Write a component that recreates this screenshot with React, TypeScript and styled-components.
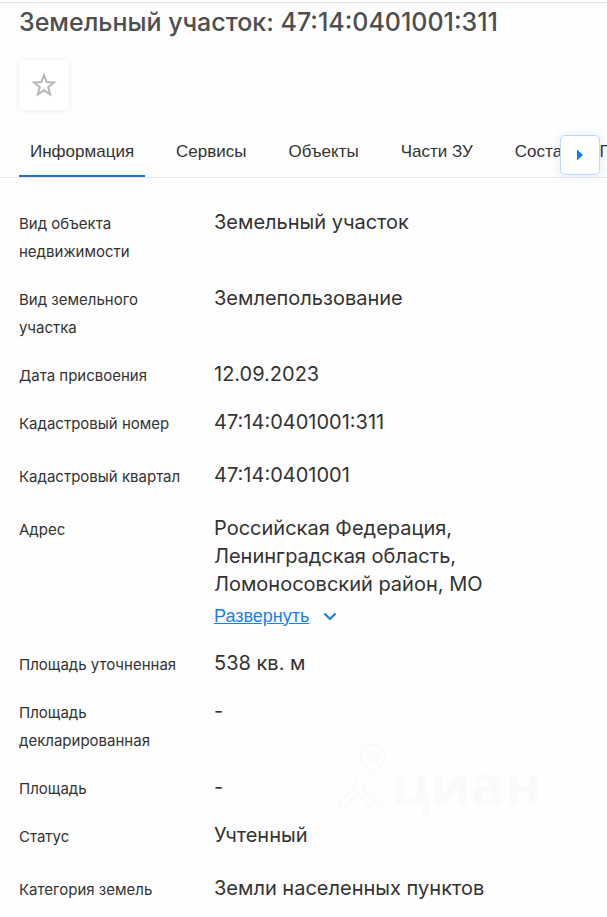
import React, { useState } from "react";
import styled, { createGlobalStyle } from "styled-components";

const GlobalStyle = createGlobalStyle`
  * { box-sizing: border-box; }
  body {
    margin: 0;
    background: #fefefe;
    color: #333;
    font-family: Inter, "Noto Sans", sans-serif;
  }
`;

const Page = styled.main`
  position: relative;
  margin-top: 2px;
  border-top: 1px solid #dfe5ee;
  padding-bottom: 15px;
`;

const Title = styled.h1`
  margin: 3px 19px 0;
  font-size: 25px;
  line-height: 32px;
  font-weight: 500;
  color: #4f4f4f;
`;

const Actions = styled.div`
  display: flex;
  padding: 22px 19px 24px;
`;

const FavoriteButton = styled.button`
  display: flex;
  align-items: center;
  justify-content: center;
  width: 50px;
  height: 50px;
  padding: 0;
  border: 0;
  border-radius: 5px;
  background: #fff;
  color: #b8b8b8;
  box-shadow: 0 1px 6px rgba(0, 0, 0, 0.08);
  cursor: pointer;
`;

const TabBar = styled.nav`
  position: relative;
  height: 44px;
  padding-left: 19px;
  border-bottom: 1px solid #e4e8ef;
`;

const TabScroller = styled.div`
  display: flex;
  gap: 20px;
  height: 43px;
  overflow: hidden;
`;

const Tab = styled.button<{ $active: boolean }>`
  flex: none;
  height: 43px;
  padding: 0 11px 6px;
  border: 0;
  border-bottom: 2px solid ${(p) => (p.$active ? "#1a75c8" : "transparent")};
  background: none;
  color: #333;
  font: 17px/32px "Liberation Sans", Arial, sans-serif;
  white-space: nowrap;
  cursor: pointer;
`;

const NextButton = styled.button`
  position: absolute;
  top: 1px;
  right: 7px;
  display: flex;
  align-items: center;
  justify-content: center;
  width: 40px;
  height: 40px;
  padding: 0;
  border: 1px solid #bcd9f8;
  border-radius: 5px;
  background: #fff;
  color: #0b80f5;
  box-shadow: 0 0 8px rgba(60, 110, 180, 0.16);
  cursor: pointer;
`;

const Details = styled.dl`
  display: flex;
  flex-direction: column;
  gap: 20px;
  margin: 0;
  padding: 30px 20px 0 19px;
`;

const Row = styled.div<{ $tall?: boolean }>`
  display: grid;
  grid-template-columns: 175px minmax(0, 280px);
  column-gap: 20px;
  min-height: ${(p) => (p.$tall ? "33px" : "28px")};
`;

const Label = styled.dt`
  margin: 2px 0 -2px;
  font-size: 15px;
  line-height: 28px;
`;

const Value = styled.dd`
  margin: 0;
  font-size: 20px;
  line-height: 28px;
`;

const ExpandLink = styled.a`
  display: flex;
  align-items: center;
  gap: 14px;
  height: 31px;
  padding-top: 4px;
  color: #1a80f0;
  font: 18px/24px "Liberation Sans", Arial, sans-serif;
  text-decoration: none;
  span { text-decoration: underline; }
`;

const Watermark = styled.div`
  position: absolute;
  left: 336px;
  top: 740px;
  display: flex;
  align-items: flex-end;
  color: #fafafa;
  pointer-events: none;
  font: 700 56px/60px "Open Sans", sans-serif;
`;

const StarIcon = () => (
  <svg width="26" height="26" viewBox="0 0 26 26" fill="none" stroke="currentColor" strokeWidth="2" aria-hidden="true">
    <path d="M13 3.2 15.6 10.1 23 10.5 17.2 15.1 19.2 22.4 13 18.3 6.8 22.4 8.8 15.1 3 10.5 10.4 10.1Z" />
  </svg>
);

const ArrowIcon = () => (
  <svg width="8" height="12" viewBox="0 0 8 12" fill="currentColor" aria-hidden="true">
    <path d="M1 .6 7 6 1 11.4Z" />
  </svg>
);

const ChevronIcon = () => (
  <svg width="14" height="10" viewBox="0 0 14 10" fill="none" stroke="currentColor" strokeWidth="2.2" aria-hidden="true">
    <path d="m1.5 2.5 5.5 5.5 5.5-5.5" />
  </svg>
);

const PinIcon = () => (
  <svg width="56" height="70" viewBox="0 0 56 70" fill="none" stroke="currentColor" strokeWidth="2" aria-hidden="true">
    <path d="M37 32c-8-8-12-12-12-18a12 12 0 0 1 24 0c0 6-4 10-12 18Z" />
    <circle cx="37" cy="14" r="5" />
    <path d="M20 37h7v10l18 17-5 5-19-19-14 17-5-5 18-19Z" />
  </svg>
);

const tabs = ["Информация", "Сервисы", "Объекты", "Части ЗУ", "Состав ЕНП"];

interface Field {
  label: string;
  value: string;
  tall?: boolean;
  expandable?: boolean;
}

const fields: Field[] = [
  { label: "Вид объекта недвижимости", value: "Земельный участок" },
  { label: "Вид земельного участка", value: "Землепользование" },
  { label: "Дата присвоения", value: "12.09.2023" },
  { label: "Кадастровый номер", value: "47:14:0401001:311", tall: true },
  { label: "Кадастровый квартал", value: "47:14:0401001", tall: true },
  { label: "Адрес", value: "Российская Федерация, Ленинградская область, Ломоносовский район, МО", expandable: true },
  { label: "Площадь уточненная", value: "538 кв. м" },
  { label: "Площадь декларированная", value: "-" },
  { label: "Площадь", value: "-" },
  { label: "Статус", value: "Учтенный", tall: true },
  { label: "Категория земель", value: "Земли населенных пунктов" },
];

export default function App() {
  const [active, setActive] = useState(0);
  return (
    <>
      <GlobalStyle />
      <Page>
        <Title>Земельный участок: 47:14:0401001:311</Title>
        <Actions>
          <FavoriteButton aria-label="В избранное">
            <StarIcon />
          </FavoriteButton>
        </Actions>
        <TabBar>
          <TabScroller role="tablist">
            {tabs.map((tab, i) => (
              <Tab key={tab} role="tab" aria-selected={i === active} $active={i === active} onClick={() => setActive(i)}>
                {tab}
              </Tab>
            ))}
          </TabScroller>
          <NextButton aria-label="Следующие вкладки">
            <ArrowIcon />
          </NextButton>
        </TabBar>
        <Details>
          {fields.map((field) => (
            <Row key={field.label} $tall={field.tall}>
              <Label>{field.label}</Label>
              <Value>
                {field.value}
                {field.expandable && (
                  <ExpandLink href="#address">
                    <span>Развернуть</span>
                    <ChevronIcon />
                  </ExpandLink>
                )}
              </Value>
            </Row>
          ))}
        </Details>
        <Watermark aria-hidden="true">
          <PinIcon />
          <span>циан</span>
        </Watermark>
      </Page>
    </>
  );
}
